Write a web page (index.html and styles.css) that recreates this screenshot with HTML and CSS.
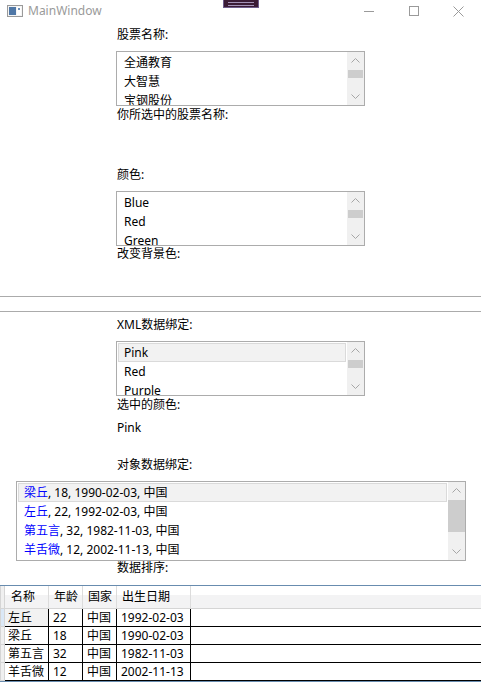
FILE: index.html
```html
<!DOCTYPE html>
<html lang="zh-CN">
<head>
<meta charset="utf-8">
<title>MainWindow</title>
<link rel="stylesheet" href="styles.css">
</head>
<body>
<div class="window">
  <div class="titlebar">
    <svg class="app-icon" width="16" height="12" viewBox="0 0 16 12">
      <rect x="0.5" y="0.5" width="15" height="11" fill="#f4f4f4" stroke="#9a9a9a"/>
      <rect x="2" y="2" width="7" height="8" fill="#4f77a6"/>
      <rect x="10" y="2" width="4" height="8" fill="#ffffff"/>
      <rect x="11" y="3" width="2" height="2" fill="#6d8fb8"/>
    </svg>
    <span class="title">MainWindow</span>
    <div class="controls">
      <div class="ctl"><svg width="10" height="10" viewBox="0 0 10 10"><line x1="0" y1="5.5" x2="10" y2="5.5" stroke="#9a9a9a"/></svg></div>
      <div class="ctl"><svg width="10" height="10" viewBox="0 0 10 10"><rect x="0.5" y="0.5" width="9" height="9" fill="none" stroke="#9a9a9a"/></svg></div>
      <div class="ctl"><svg width="11" height="11" viewBox="0 0 11 11"><path d="M0.5 0.5 L10.5 10.5 M10.5 0.5 L0.5 10.5" stroke="#9a9a9a" fill="none"/></svg></div>
    </div>
    <div class="drag-tab"><span></span><span></span></div>
  </div>

  <div class="content">
    <div class="lbl lbl-first">股票名称:</div>
    <div class="listbox lb-col">
      <div class="lb-items">
        <div class="item">全通教育</div>
        <div class="item">大智慧</div>
        <div class="item">宝钢股份</div>
      </div>
      <div class="vscroll">
        <div class="arrow"><svg width="9" height="5" viewBox="0 0 9 5"><polyline points="0.5,4.5 4.5,0.5 8.5,4.5" fill="none" stroke="#a6a6a6"/></svg></div>
        <div class="track"><div class="thumb thumb-small"></div></div>
        <div class="arrow"><svg width="9" height="5" viewBox="0 0 9 5"><polyline points="0.5,0.5 4.5,4.5 8.5,0.5" fill="none" stroke="#a6a6a6"/></svg></div>
      </div>
    </div>
    <div class="lbl lbl-after">你所选中的股票名称:</div>

    <div class="lbl lbl-color">颜色:</div>
    <div class="listbox lb-col">
      <div class="lb-items">
        <div class="item">Blue</div>
        <div class="item">Red</div>
        <div class="item">Green</div>
      </div>
      <div class="vscroll">
        <div class="arrow"><svg width="9" height="5" viewBox="0 0 9 5"><polyline points="0.5,4.5 4.5,0.5 8.5,4.5" fill="none" stroke="#a6a6a6"/></svg></div>
        <div class="track"><div class="thumb thumb-small"></div></div>
        <div class="arrow"><svg width="9" height="5" viewBox="0 0 9 5"><polyline points="0.5,0.5 4.5,4.5 8.5,0.5" fill="none" stroke="#a6a6a6"/></svg></div>
      </div>
    </div>
    <div class="lbl">改变背景色:</div>

    <div class="separator"></div>

    <div class="lbl lbl-xml">XML数据绑定:</div>
    <div class="listbox lb-col">
      <div class="lb-items">
        <div class="item selected">Pink</div>
        <div class="item">Red</div>
        <div class="item">Purple</div>
      </div>
      <div class="vscroll">
        <div class="arrow"><svg width="9" height="5" viewBox="0 0 9 5"><polyline points="0.5,4.5 4.5,0.5 8.5,4.5" fill="none" stroke="#a6a6a6"/></svg></div>
        <div class="track"><div class="thumb thumb-small"></div></div>
        <div class="arrow"><svg width="9" height="5" viewBox="0 0 9 5"><polyline points="0.5,0.5 4.5,4.5 8.5,0.5" fill="none" stroke="#a6a6a6"/></svg></div>
      </div>
    </div>
    <div class="lbl lbl-after">选中的颜色:</div>
    <div class="lbl lbl-value">Pink</div>

    <div class="lbl lbl-object">对象数据绑定:</div>
    <div class="listbox lb-wide">
      <div class="lb-items">
        <div class="item item-wide selected"><span class="name">梁丘</span>, 18, 1990-02-03, 中国</div>
        <div class="item item-wide"><span class="name">左丘</span>, 22, 1992-02-03, 中国</div>
        <div class="item item-wide"><span class="name">第五言</span>, 32, 1982-11-03, 中国</div>
        <div class="item item-wide"><span class="name">羊舌微</span>, 12, 2002-11-13, 中国</div>
      </div>
      <div class="vscroll">
        <div class="arrow"><svg width="9" height="5" viewBox="0 0 9 5"><polyline points="0.5,4.5 4.5,0.5 8.5,4.5" fill="none" stroke="#a6a6a6"/></svg></div>
        <div class="track"><div class="thumb thumb-big"></div></div>
        <div class="arrow"><svg width="9" height="5" viewBox="0 0 9 5"><polyline points="0.5,0.5 4.5,4.5 8.5,0.5" fill="none" stroke="#a6a6a6"/></svg></div>
      </div>
    </div>
    <div class="lbl lbl-sort">数据排序:</div>

    <div class="grid">
      <div class="grow header">
        <div class="rh"></div>
        <div class="hc c1">名称</div>
        <div class="hc c2">年龄</div>
        <div class="hc c3">国家</div>
        <div class="hc c4">出生日期</div>
        <div class="hc fill"></div>
      </div>
      <div class="grow">
        <div class="rh rh-current"></div>
        <div class="cell c1 current">左丘</div>
        <div class="cell c2">22</div>
        <div class="cell c3">中国</div>
        <div class="cell c4">1992-02-03</div>
        <div class="cell fill"></div>
      </div>
      <div class="grow">
        <div class="rh"></div>
        <div class="cell c1">梁丘</div>
        <div class="cell c2">18</div>
        <div class="cell c3">中国</div>
        <div class="cell c4">1990-02-03</div>
        <div class="cell fill"></div>
      </div>
      <div class="grow">
        <div class="rh"></div>
        <div class="cell c1">第五言</div>
        <div class="cell c2">32</div>
        <div class="cell c3">中国</div>
        <div class="cell c4">1982-11-03</div>
        <div class="cell fill"></div>
      </div>
      <div class="grow">
        <div class="rh"></div>
        <div class="cell c1">羊舌微</div>
        <div class="cell c2">12</div>
        <div class="cell c3">中国</div>
        <div class="cell c4">2002-11-13</div>
        <div class="cell fill"></div>
      </div>
    </div>
  </div>
</div>
</body>
</html>
```
FILE: styles.css
```css
html, body {
  margin: 0;
  padding: 0;
}
body {
  width: 481px;
  height: 688px;
  overflow: hidden;
  background: #fff;
  color: #000;
  font-family: "Noto Sans", "Noto Sans CJK SC", sans-serif;
  font-size: 12px;
}
.window {
  width: 481px;
  height: 688px;
  display: flex;
  flex-direction: column;
}

/* title bar */
.titlebar {
  position: relative;
  height: 22px;
  display: flex;
  align-items: center;
  flex-shrink: 0;
}
.app-icon {
  margin-left: 7px;
  display: block;
}
.title {
  margin-left: 5px;
  color: #9a9a9a;
  font-size: 12px;
  line-height: 16px;
}
.controls {
  margin-left: auto;
  display: flex;
  height: 22px;
}
.ctl {
  width: 45px;
  height: 22px;
  display: flex;
  align-items: center;
  justify-content: center;
}
.ctl svg { display: block; }
.drag-tab {
  position: absolute;
  left: 223px;
  top: 0;
  width: 36px;
  height: 8px;
  box-sizing: border-box;
  background: #3b1c36;
  border: 1px solid #6e5c8c;
  border-top: none;
  display: flex;
  flex-direction: column;
  padding: 2px 4px 0;
  gap: 2px;
}
.drag-tab span {
  display: block;
  height: 1px;
  background: #a493b8;
}

/* content */
.content {
  display: flex;
  flex-direction: column;
}
.lbl {
  margin-left: 117px;
  line-height: 16px;
  height: 16px;
  white-space: nowrap;
}
.lbl-first { padding-top: 5px; padding-bottom: 8px; }
.lbl-after { margin-top: 1px; }
.lbl-color { margin-top: 44px; margin-bottom: 8px; }
.lbl-xml { margin-top: 5px; margin-bottom: 8px; }
.lbl-value { margin-top: 7px; }
.lbl-object { margin-top: 21px; margin-bottom: 8px; }
.lbl-sort { margin-top: -1px; }

.separator {
  margin-top: 34px;
  height: 14px;
  border-top: 1px solid #ababab;
  border-bottom: 1px solid #ababab;
}

/* list boxes */
.listbox {
  display: flex;
  box-sizing: border-box;
  border: 1px solid #acacac;
  background: #fff;
  overflow: hidden;
}
.lb-col {
  margin-left: 116px;
  width: 249px;
  height: 55px;
}
.lb-wide {
  margin-left: 16px;
  width: 450px;
  height: 80px;
}
.lb-items {
  flex: 1;
  padding: 1px;
  overflow: hidden;
  min-width: 0;
}
.item {
  height: 19px;
  box-sizing: border-box;
  border: 1px solid transparent;
  padding: 0 5px;
  line-height: 17px;
  white-space: nowrap;
}
.item.selected {
  background: #f2f2f2;
  border-color: #dadada;
}
.name { color: #0000ff; }

.vscroll {
  width: 17px;
  flex-shrink: 0;
  background: #f0f0f0;
  display: flex;
  flex-direction: column;
}
.arrow {
  height: 17px;
  flex-shrink: 0;
  display: flex;
  align-items: center;
  justify-content: center;
}
.arrow svg { display: block; }
.track {
  flex: 1;
  padding-top: 1px;
}
.thumb {
  margin: 0 1px;
  background: #cdcdcd;
}
.thumb-small { height: 8px; }
.thumb-big { height: 32px; margin: 0; }

/* data grid */
.grid {
  margin-top: 9px;
  border-top: 1px solid #688caf;
  border-bottom: 1px solid #688caf;
  display: flex;
  flex-direction: column;
}
.grow {
  display: flex;
  height: 18px;
}
.grow.header {
  height: 23px;
}
.rh {
  width: 5px;
  flex-shrink: 0;
  box-sizing: border-box;
  background: #f0f0f0;
  border-left: 1px solid #d5d5d5;
  border-right: 1px solid #d5d5d5;
  border-bottom: 1px solid #d5d5d5;
}
.rh-current {
  background: #dbe8f6;
}
.hc {
  box-sizing: border-box;
  height: 23px;
  line-height: 22px;
  padding-left: 5px;
  border-right: 1px solid #dcdcdc;
  border-bottom: 1px solid #d5d5d5;
  background: linear-gradient(#ffffff 0, #ffffff 40%, #f3f3f4 40%, #f3f3f4 100%);
  white-space: nowrap;
}
.header .c1 { padding-left: 6px; }
.cell {
  box-sizing: border-box;
  height: 18px;
  line-height: 17px;
  padding-left: 4px;
  border-right: 1px solid #000;
  border-bottom: 1px solid #000;
  white-space: nowrap;
}
.cell.current { background: #f2f2f2; }
.c1 { width: 44px; padding-left: 3px; }
.c2 { width: 34px; }
.c3 { width: 34px; }
.c4 { width: 74px; }
.fill {
  flex: 1;
  border-right: none;
}
```
